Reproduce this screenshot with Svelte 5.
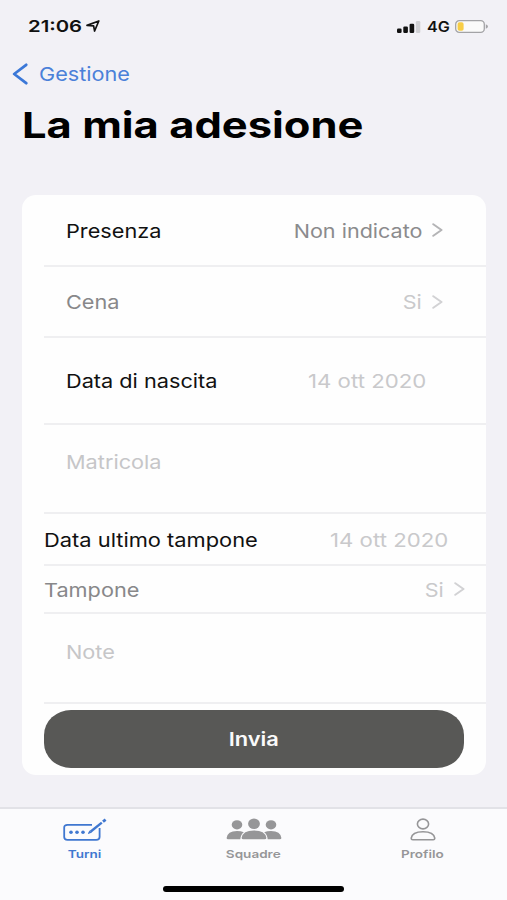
<script>
	const rows = [
		{ label: 'Presenza', value: 'Non indicato', arrow: true, kind: 'presenza' },
		{ label: 'Cena', value: 'Si', arrow: true, kind: 'cena' },
		{ label: 'Data di nascita', value: '14 ott 2020', kind: 'nascita' },
		{ label: 'Matricola', kind: 'matricola' },
		{ label: 'Data ultimo tampone', value: '14 ott 2020', kind: 'ultimo' },
		{ label: 'Tampone', value: 'Si', arrow: true, kind: 'tampone' },
		{ label: 'Note', kind: 'note' }
	];
</script>

<div class="screen">
	<header class="status">
		<span class="time wide">21:06</span>
		<svg class="location" width="14" height="12" viewBox="0 0 14 12">
			<path d="M1 5.4 L12.8 1 L8.6 11 L7.6 5.8 Z" fill="none" stroke="#111" stroke-width="1.7" stroke-linejoin="round" />
		</svg>
		<svg class="signal" width="24" height="12" viewBox="0 0 24 12">
			<rect x="0" y="7.5" width="4.6" height="4.5" rx="1.2" />
			<rect x="6.3" y="5.5" width="4.6" height="6.5" rx="1.2" />
			<rect x="12.6" y="2.8" width="4.6" height="9.2" rx="1.2" />
			<rect x="18.9" y="0" width="4.4" height="12" rx="1.2" fill="#cfcfd3" />
		</svg>
		<span class="network wide">4G</span>
		<svg class="battery" width="34" height="13" viewBox="0 0 34 13">
			<rect x=".7" y=".7" width="28.6" height="11.6" rx="3.6" fill="#fafafa" stroke="#a3a3a6" stroke-width="1.3" />
			<rect x="2.6" y="2.2" width="6" height="8.6" rx="1.8" fill="#f7cd46" />
			<path d="M30.8 4.2 Q33 5 33 6.5 Q33 8 30.8 8.8 Z" fill="#a3a3a6" />
		</svg>
	</header>

	<nav class="back">
		<svg width="16" height="22" viewBox="0 0 16 22">
			<path d="M14.2 1.8 L2.2 11 L14.2 20.2" fill="none" stroke="#3b78d8" stroke-width="2.8" stroke-linecap="round" stroke-linejoin="round" />
		</svg>
		<span class="wide">Gestione</span>
	</nav>

	<h1><span class="wide">La mia adesione</span></h1>

	<main class="card">
		{#each rows as row}
			<div class="row {row.kind}">
				<span class="label wide">{row.label}</span>
				{#if row.value}
					<span class="value wide">{row.value}</span>
				{/if}
				{#if row.arrow}
					<svg class="arrow" width="11" height="14" viewBox="0 0 11 14">
						<path d="M1.3 1.2 L9.5 7 L1.3 12.8" fill="none" stroke="currentColor" stroke-width="2" stroke-linecap="round" stroke-linejoin="round" />
					</svg>
				{/if}
			</div>
		{/each}
		<button><span class="wide">Invia</span></button>
	</main>

	<footer>
		<div class="tabs">
			<div class="tab turni">
				<svg width="44" height="26" viewBox="0 0 44 26">
					<g fill="none" stroke="currentColor" stroke-width="1.8">
						<path d="M29 6.8 H4.5 Q1.2 6.8 1.2 9.6 V19 Q1.2 21.8 4.5 21.8 H33.3 Q36.6 21.8 36.6 19 V10" />
						<path d="M27.5 13.7 L38.8 4.6" stroke-width="2.4" />
						<path d="M40 3.6 L42.6 1.6" stroke-width="2.8" />
					</g>
					<path d="M24.6 15.9 L26.5 12.6 L28.7 14.7 Z" />
					<circle cx="8" cy="14.3" r="1.8" />
					<circle cx="14" cy="14.3" r="1.8" />
					<circle cx="20" cy="14.3" r="1.8" />
				</svg>
				<span class="wide">Turni</span>
			</div>
			<div class="tab squadre">
				<svg width="56" height="26" viewBox="0 0 56 26">
					<ellipse cx="11" cy="6.8" rx="5.3" ry="4.6" />
					<ellipse cx="45" cy="6.8" rx="5.3" ry="4.6" />
					<path d="M.6 20 Q1.4 12.9 11 12.9 Q15 12.9 17.8 14.2 Q14.6 16.6 14.3 21.3 H2.2 Q.6 21.3 .6 20 Z" />
					<path d="M55.4 20 Q54.6 12.9 45 12.9 Q41 12.9 38.2 14.2 Q41.4 16.6 41.7 21.3 H53.8 Q55.4 21.3 55.4 20 Z" />
					<ellipse cx="28" cy="5.8" rx="5.9" ry="5.2" />
					<path d="M15.6 19.9 Q16.8 12.5 28 12.5 Q39.2 12.5 40.4 19.9 Q40.4 21.3 38.6 21.3 H17.4 Q15.6 21.3 15.6 19.9 Z" />
				</svg>
				<span class="wide">Squadre</span>
			</div>
			<div class="tab profilo">
				<svg width="26" height="26" viewBox="0 0 26 26">
					<g fill="none" stroke="currentColor" stroke-width="1.6">
						<ellipse cx="13" cy="6" rx="5.6" ry="4.9" />
						<path d="M1.2 20.2 Q2.2 13.8 13 13.8 Q23.8 13.8 24.8 20.2 Q24.8 21.8 23.2 21.8 H2.8 Q1.2 21.8 1.2 20.2 Z" />
					</g>
				</svg>
				<span class="wide">Profilo</span>
			</div>
		</div>
		<div class="home"></div>
	</footer>
</div>

<style>
	:global(body) {
		margin: 0;
	}

	.screen {
		display: flex;
		flex-direction: column;
		width: 507px;
		height: 900px;
		overflow: hidden;
		background: #f2f1f6;
		color: #111;
		font-family: Inter, "Liberation Sans", sans-serif;
		font-size: 19px;
		line-height: 24px;
	}

	/* extended lettering, stretched from the left edge */
	.wide {
		display: inline-block;
		white-space: nowrap;
		transform: scaleX(var(--stretch, 1.15));
		transform-origin: left;
	}

	svg {
		flex: none;
		fill: currentColor;
	}

	.status {
		display: flex;
		align-items: center;
		height: 53px;
		padding: 0 18px 0 28px;
	}

	.time {
		--stretch: 1.23;
		width: 58px;
		padding-bottom: 2px;
		font-size: 16.5px;
		font-weight: 600;
	}

	.location {
		margin-bottom: 2px;
	}

	.signal {
		margin-left: auto;
	}

	.network {
		width: 21px;
		margin: 0 7px 0 6px;
		font-size: 14px;
		font-weight: 600;
	}

	.back {
		display: flex;
		align-items: center;
		gap: 11px;
		height: 42px;
		padding-left: 12px;
		color: #4a80d9;
	}

	.back .wide {
		--stretch: 1.14;
		padding-top: 2px;
	}

	h1 {
		height: 100px;
		margin: 0;
		padding-left: 22px;
		font-size: 36px;
		line-height: 60px;
		font-weight: 700;
		color: #000;
	}

	h1 .wide {
		--stretch: 1.208;
	}

	.card {
		display: flex;
		flex-direction: column;
		box-sizing: border-box;
		width: 464px;
		height: 580px;
		margin-left: 22px;
		padding-left: 22px;
		border-radius: 14px;
		background: #fefefe;
	}

	.row {
		display: flex;
		align-items: center;
		box-sizing: border-box;
		height: 71px;
		padding: 0 43px 0 22px;
		border-bottom: 2px solid #efeff1;
	}

	.row .wide {
		padding-top: 3px;
	}

	.label {
		--stretch: 1.142;
	}

	.value {
		--stretch: 1.135;
		margin-left: auto;
		transform-origin: right;
		color: #c9c9cb;
	}

	.arrow {
		margin-left: 10px;
		color: #d2d2d4;
	}

	.presenza {
		height: 72px;
	}

	.presenza .value {
		color: #8b8b8d;
	}

	.presenza .arrow {
		color: #b4b4b6;
	}

	.cena .label,
	.tampone .label {
		color: #88888a;
	}

	.nascita {
		height: 87px;
		padding-right: 60px;
	}

	.nascita .value,
	.ultimo .value {
		--stretch: 1.168;
	}

	.matricola {
		height: 89px;
		padding-bottom: 14px;
	}

	.matricola .label,
	.note .label {
		color: #c6c6c8;
	}

	.ultimo {
		height: 52px;
		padding: 0 38px 0 0;
	}

	.ultimo .label {
		--stretch: 1.15;
	}

	.tampone {
		height: 48px;
		padding: 0 21px 0 0;
	}

	.note {
		height: 90px;
		padding-bottom: 14px;
	}

	button {
		width: 420px;
		height: 58px;
		margin-top: 6px;
		padding: 0;
		border: none;
		border-radius: 27px / 25px;
		background: #585856;
		color: #fafafa;
		font: 600 19px/24px Inter, "Liberation Sans", sans-serif;
	}

	button .wide {
		padding-top: 2px;
		transform-origin: center;
	}

	footer {
		box-sizing: border-box;
		height: 93px;
		margin-top: auto;
		border-top: 2px solid #e2e2e7;
		background: #fbfbfd;
	}

	.tabs {
		display: grid;
		grid-template-columns: repeat(3, 1fr);
		padding-top: 9px;
	}

	.tab {
		display: flex;
		flex-direction: column;
		align-items: center;
		gap: 2px;
		color: #969698;
		font-size: 11px;
		font-weight: 600;
		line-height: 16px;
	}

	.tab .wide {
		--stretch: 1.23;
		transform-origin: center;
	}

	.turni {
		color: #3f77d0;
	}

	.home {
		width: 181px;
		height: 6px;
		margin: 24px auto 0;
		border-radius: 3px;
		background: #000;
	}
</style>
